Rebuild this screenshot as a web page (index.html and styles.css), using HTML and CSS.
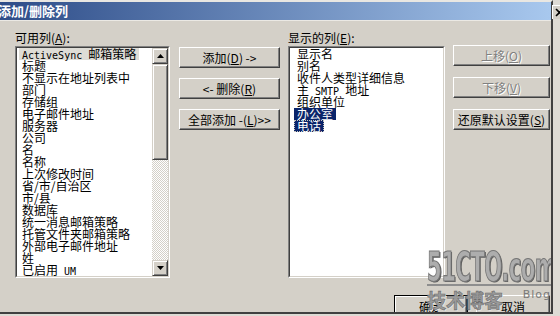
FILE: index.html
```html
<!DOCTYPE html>
<html lang="zh-CN">
<head>
    <meta charset="UTF-8">
    <title>添加/删除列</title>
    <link rel="stylesheet" href="styles.css">
</head>
<body>
    <div class="window">
        <div class="titlebar"><span class="title">添加/删除列</span></div>
        <div class="content">
            <div class="columns">
                <div class="list-col left-col">
                    <div class="label">可用列(<u>A</u>):</div>
                    <div class="listbox">
                        <div class="listbox-inner">
                            <div class="items">
                                <div class="item inactive"><span><i class="en">ActiveSync </i>邮箱策略</span></div>
                                <div class="item"><span>标题</span></div>
                                <div class="item"><span>不显示在地址列表中</span></div>
                                <div class="item"><span>部门</span></div>
                                <div class="item"><span>存储组</span></div>
                                <div class="item"><span>电子邮件地址</span></div>
                                <div class="item"><span>服务器</span></div>
                                <div class="item"><span>公司</span></div>
                                <div class="item"><span>名</span></div>
                                <div class="item"><span>名称</span></div>
                                <div class="item"><span>上次修改时间</span></div>
                                <div class="item"><span>省/市/自治区</span></div>
                                <div class="item"><span>市/县</span></div>
                                <div class="item"><span>数据库</span></div>
                                <div class="item"><span>统一消息邮箱策略</span></div>
                                <div class="item"><span>托管文件夹邮箱策略</span></div>
                                <div class="item"><span>外部电子邮件地址</span></div>
                                <div class="item"><span>姓</span></div>
                                <div class="item"><span>已启用<i class="en"> UM</i></span></div>
                            </div>
                            <div class="scrollbar">
                                <div class="sb-btn">
                                    <svg width="7" height="4" viewBox="0 0 7 4"><path d="M3.5 0 L7 4 L0 4 Z" fill="#000"/></svg>
                                </div>
                                <div class="sb-track">
                                    <div class="sb-thumb"></div>
                                </div>
                                <div class="sb-btn">
                                    <svg width="7" height="4" viewBox="0 0 7 4"><path d="M0 0 L7 0 L3.5 4 Z" fill="#000"/></svg>
                                </div>
                            </div>
                        </div>
                    </div>
                </div>

                <div class="btn-col mid-col">
                    <button class="btn">添加(<u>D</u>) -&gt;</button>
                    <button class="btn">&lt;- 删除(<u>R</u>)</button>
                    <button class="btn">全部添加 -(<u>L</u>)&gt;&gt;</button>
                </div>

                <div class="list-col right-col">
                    <div class="label">显示的列(<u>E</u>):</div>
                    <div class="listbox">
                        <div class="listbox-inner">
                            <div class="items">
                                <div class="item"><span>显示名</span></div>
                                <div class="item"><span>别名</span></div>
                                <div class="item"><span>收件人类型详细信息</span></div>
                                <div class="item"><span>主<i class="en"> SMTP </i>地址</span></div>
                                <div class="item"><span>组织单位</span></div>
                                <div class="item selected"><span>办公室</span></div>
                                <div class="item selected focus"><span>电话</span></div>
                            </div>
                        </div>
                    </div>
                </div>

                <div class="btn-col side-col">
                    <button class="btn" disabled>上移(<u>O</u>)</button>
                    <button class="btn" disabled>下移(<u>V</u>)</button>
                    <button class="btn">还原默认设置(<u>S</u>)</button>
                </div>
            </div>

            <div class="footer">
                <button class="btn btn-default">确定</button>
                <button class="btn">取消</button>
            </div>
        </div>

        <div class="watermark">
            <div class="wm-logo">51CTO.com</div>
            <div class="wm-line"></div>
            <div class="wm-sub">
                <span class="wm-cn">技术博客</span>
                <span class="wm-blog">Blog</span>
            </div>
        </div>
    </div>

    <div class="close-btn">
        <svg width="10" height="9" viewBox="0 0 10 9"><path d="M1 1 L8 8 M8 1 L1 8" stroke="#000" stroke-width="1.6"/></svg>
    </div>
</body>
</html>
```

FILE: styles.css
```css
body {
    margin: 0;
    position: relative;
    background-color: #dedbd5;
    font-family: "Noto Sans CJK SC", sans-serif;
    font-size: 12px;
    color: #000;
}
.window {
    position: relative;
    width: 551px;
    height: 310px;
    background-color: #d4d0c8;
    border-top: 2px solid #e9e7e2;
    border-right: 2px solid #404040;
    border-bottom: 2px solid #404040;
    overflow: hidden;
}
.titlebar {
    height: 18px;
    line-height: 18px;
    background: linear-gradient(to right, #2d4c88, #a8c8ee);
    border-bottom: 1px solid #ebe9e4;
    color: #fff;
    font-size: 13px;
    font-weight: bold;
    white-space: nowrap;
}
.title {
    margin-left: -2px;
}
.content {
    padding: 10px 1px 0 15px;
}
.columns {
    display: flex;
}
.label {
    height: 14px;
    line-height: 14px;
    margin-bottom: 1px;
    white-space: nowrap;
}
.left-col {
    width: 155px;
}
.right-col {
    width: 157px;
    margin-left: 8px;
}
.listbox {
    box-sizing: border-box;
    height: 232px;
    border: 1px solid;
    border-color: #808080 #fff #fff #808080;
}
.listbox-inner {
    box-sizing: border-box;
    height: 100%;
    display: flex;
    background-color: #fff;
    border: 1px solid;
    border-color: #404040 #d4d0c8 #d4d0c8 #404040;
    overflow: hidden;
}
.items {
    flex: 1;
    padding-left: 2px;
    overflow: hidden;
}
.right-col .items {
    padding-left: 4px;
}
.item {
    height: 12px;
    line-height: 12px;
    white-space: nowrap;
}
.item span {
    display: inline-block;
    padding: 0 3px;
    height: 12px;
}
.en {
    font-family: "DejaVu Sans Mono", monospace;
    font-style: normal;
    font-size: 10px;
    white-space: pre;
}
.item.inactive span {
    background-color: #dedcd6;
}
.item.selected span {
    background-color: #0a246a;
    color: #fff;
}
.item.focus span {
    outline: 1px dotted #c9c6bd;
    outline-offset: -1px;
}
.scrollbar {
    width: 16px;
    display: flex;
    flex-direction: column;
}
.sb-btn, .sb-thumb {
    box-sizing: border-box;
    background-color: #d4d0c8;
    border: 1px solid;
    border-color: #d4d0c8 #404040 #404040 #d4d0c8;
    box-shadow: inset 1px 1px #fff, inset -1px -1px #808080;
}
.sb-btn {
    height: 16px;
    display: flex;
    align-items: center;
    justify-content: center;
}
.sb-track {
    flex: 1;
    background: repeating-conic-gradient(#fff 0 25%, #d4d0c8 0 50%) 0 0 / 2px 2px;
}
.sb-thumb {
    height: 96px;
}
.btn-col {
    display: flex;
    flex-direction: column;
    gap: 10px;
}
.mid-col {
    width: 101px;
    margin-left: 9px;
    padding-top: 16px;
}
.side-col {
    width: 97px;
    margin-left: 8px;
    padding-top: 14px;
    gap: 11px;
}
.btn {
    box-sizing: border-box;
    height: 21px;
    padding: 0;
    background-color: #d4d0c8;
    border: 1px solid;
    border-color: #fff #404040 #404040 #fff;
    box-shadow: inset -1px -1px #808080;
    font-family: inherit;
    font-size: 12px;
    line-height: 19px;
    color: #000;
    text-align: center;
    white-space: nowrap;
}
.btn:disabled {
    color: #808080;
    text-shadow: 1px 1px 0 #fff;
}
.footer {
    display: flex;
    justify-content: flex-end;
    gap: 8px;
    margin-top: 17px;
}
.footer .btn {
    width: 74px;
    height: 23px;
    line-height: 21px;
}
.btn-default {
    border-color: #000;
    box-shadow: inset 1px 1px #fff, inset -1px -1px #404040, inset -2px -2px #808080;
}
.watermark {
    position: absolute;
    left: 427px;
    top: 248px;
    width: 124px;
    pointer-events: none;
}
.wm-logo {
    font-family: "DejaVu Sans Condensed", "DejaVu Sans", sans-serif;
    font-weight: bold;
    font-size: 40px;
    line-height: 34px;
    letter-spacing: -1px;
    transform: scaleX(0.59);
    transform-origin: left;
    white-space: nowrap;
    color: #adadad;
    -webkit-text-stroke: 1.2px #767676;
    text-shadow: 2px 1px 0 #5e5e5e;
}
.wm-line {
    height: 2px;
    margin-top: 0;
    background-color: #8e8e8e;
}
.wm-sub {
    display: flex;
    align-items: flex-start;
    justify-content: space-between;
    margin-top: 2px;
}
.wm-cn {
    font-size: 19px;
    line-height: 24px;
    font-weight: bold;
    color: #9a9a9a;
    -webkit-text-stroke: 0.6px #6e6e6e;
    text-shadow: 1px 1px 0 #e6e6e6;
}
.wm-blog {
    font-family: "DejaVu Sans", sans-serif;
    font-size: 11px;
    line-height: 12px;
    color: #7a7a7a;
    letter-spacing: 1px;
    margin-top: 1px;
}
.close-btn {
    position: absolute;
    left: 552px;
    top: 5px;
    width: 16px;
    height: 14px;
    box-sizing: border-box;
    background-color: #d4d0c8;
    border-top: 1px solid #fff;
    border-left: 1px solid #fff;
    padding: 2px 0 0 2px;
}
.close-btn svg {
    display: block;
}
```
